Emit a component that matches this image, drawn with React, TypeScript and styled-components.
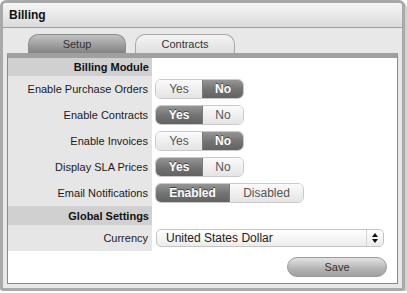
import { FC, Fragment } from "react";
import styled, { createGlobalStyle } from "styled-components";

const GlobalStyle = createGlobalStyle`
  html, body {
    margin: 0;
    padding: 0;
    background: #ffffff;
  }
  body {
    font-family: "Liberation Sans", Arial, sans-serif;
    color: #222;
  }
`;

const Frame = styled.div`
  box-sizing: border-box;
  width: 405px;
  height: 291px;
  border: 3px solid #a9a9a9;
  border-radius: 6px 6px 3px 3px;
  background: #e8e8e8;
  box-shadow: 2px 2px 0 #d2d2d2;
  display: flex;
  flex-direction: column;
  overflow: hidden;
`;

const Header = styled.div`
  height: 24px;
  flex: none;
  display: flex;
  align-items: center;
  padding-left: 6px;
  background: linear-gradient(#f6f6f6, #dadada);
  border-bottom: 1px solid #9f9f9f;
  font-size: 12px;
  font-weight: bold;
  color: #111;
`;

const TabBar = styled.div`
  display: flex;
  gap: 9px;
  margin-top: 6px;
  padding-left: 25px;
  height: 19px;
  flex: none;
`;

const Tab = styled.div<{ $active?: boolean; $width: number }>`
  box-sizing: border-box;
  width: ${(p) => p.$width}px;
  height: 19px;
  display: flex;
  align-items: center;
  justify-content: center;
  font-size: 11px;
  color: #333;
  border-radius: 10px 10px 0 0;
  border: 1px solid ${(p) => (p.$active ? "#a8a8a8" : "#8c8c8c")};
  border-bottom: none;
  background: ${(p) =>
    p.$active
      ? "linear-gradient(#f4f4f4, #dedede)"
      : "linear-gradient(#c2c2c2, #838383)"};
`;

const Panel = styled.div`
  margin: 0 4px 4px 4px;
  flex: 1;
  border: 1px solid #8a8a8a;
  border-top: 5px solid #a0a0a0;
  background: #ffffff;
  display: flex;
  flex-direction: column;
`;

const Grid = styled.div`
  display: grid;
  grid-template-columns: 144px 1fr;
`;

const SectionLabel = styled.div<{ $h: number }>`
  height: ${(p) => p.$h}px;
  background: #d0d0d0;
  display: flex;
  align-items: center;
  justify-content: flex-end;
  padding-right: 3px;
  font-size: 11px;
  font-weight: bold;
  color: #111;
`;

const Label = styled.div`
  height: 26px;
  background: #e6e6e6;
  display: flex;
  align-items: center;
  justify-content: flex-end;
  padding-right: 4px;
  font-size: 11px;
  color: #1a1a1a;
`;

const Value = styled.div`
  display: flex;
  align-items: center;
  padding-left: 3px;
`;

const Toggle = styled.div`
  display: flex;
  height: 20px;
  box-sizing: border-box;
  border-radius: 6px;
  overflow: hidden;
  border: 1px solid #c9c9c9;
`;

const Segment = styled.div<{ $on?: boolean; $width: number }>`
  box-sizing: border-box;
  width: ${(p) => p.$width}px;
  display: flex;
  align-items: center;
  justify-content: center;
  font-size: 12px;
  font-weight: ${(p) => (p.$on ? "bold" : "normal")};
  color: ${(p) => (p.$on ? "#ffffff" : "#555")};
  text-shadow: ${(p) => (p.$on ? "0 -1px 0 #444" : "none")};
  background: ${(p) =>
    p.$on
      ? "linear-gradient(#959595, #727272 55%, #626262)"
      : "linear-gradient(#fbfbfb, #e4e4e4)"};
  & + & {
    border-left: 1px solid #7a7a7a;
  }
`;

const Select = styled.div`
  box-sizing: border-box;
  margin-left: 1px;
  width: 228px;
  height: 18px;
  display: flex;
  align-items: center;
  border: 1px solid #c4c4c4;
  border-radius: 5px;
  background: linear-gradient(#ffffff, #ececec);
  font-size: 12px;
  color: #222;
`;

const SelectText = styled.span`
  flex: 1;
  padding-left: 9px;
`;

const SelectArrows = styled.span`
  width: 16px;
  height: 100%;
  display: flex;
  align-items: center;
  justify-content: center;
  border-left: 1px solid #d4d4d4;
`;

const Footer = styled.div`
  display: flex;
  justify-content: flex-end;
  padding: 6px 10px 0 0;
`;

const SaveButton = styled.button`
  width: 100px;
  height: 20px;
  border: 1px solid #9a9a9a;
  border-radius: 10px;
  background: linear-gradient(#e2e2e2, #b4b4b4 60%, #a2a2a2);
  font-family: "Liberation Sans", Arial, sans-serif;
  font-size: 11px;
  color: #333;
  padding: 0;
`;

type YesNoProps = { value: boolean };

const YesNo: FC<YesNoProps> = ({ value }) => (
  <Toggle>
    <Segment $on={value} $width={46}>
      Yes
    </Segment>
    <Segment $on={!value} $width={41}>
      No
    </Segment>
  </Toggle>
);

const rows = [
  { label: "Enable Purchase Orders", value: false },
  { label: "Enable Contracts", value: true },
  { label: "Enable Invoices", value: false },
  { label: "Display SLA Prices", value: true },
];

const App: FC = () => {
  return (
    <>
      <GlobalStyle />
      <Frame>
        <Header>Billing</Header>
        <TabBar>
          <Tab $width={98}>Setup</Tab>
          <Tab $width={100} $active>
            Contracts
          </Tab>
        </TabBar>
        <Panel>
          <Grid>
            <SectionLabel $h={18}>Billing Module</SectionLabel>
            <Value />
            {rows.map((r) => (
              <Fragment key={r.label}>
                <Label>{r.label}</Label>
                <Value>
                  <YesNo value={r.value} />
                </Value>
              </Fragment>
            ))}
            <Label>Email Notifications</Label>
            <Value>
              <Toggle>
                <Segment $on $width={73}>
                  Enabled
                </Segment>
                <Segment $width={74}>Disabled</Segment>
              </Toggle>
            </Value>
            <SectionLabel $h={19}>Global Settings</SectionLabel>
            <Value />
            <Label>Currency</Label>
            <Value>
              <Select>
                <SelectText>United States Dollar</SelectText>
                <SelectArrows>
                  <svg width="6" height="10" viewBox="0 0 6 10">
                    <path d="M3 0 L6 4 L0 4 Z M0 6 L6 6 L3 10 Z" fill="#111" />
                  </svg>
                </SelectArrows>
              </Select>
            </Value>
          </Grid>
          <Footer>
            <SaveButton>Save</SaveButton>
          </Footer>
        </Panel>
      </Frame>
    </>
  );
};

export default App;
